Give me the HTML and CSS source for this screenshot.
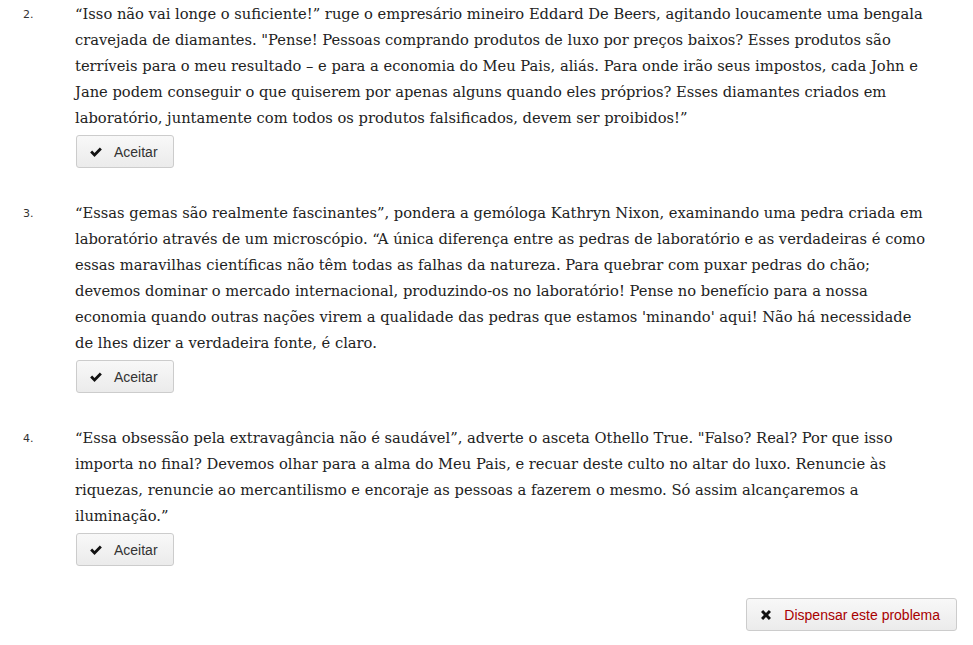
FILE: index.html
```html
<!DOCTYPE html>
<html lang="pt">
<head>
<meta charset="utf-8">
<link rel="stylesheet" href="styles.css">
</head>
<body>
<ol class="opts">
  <li class="opt">
    <span class="num">2.</span>
    <div class="body">
      <p class="quote">“Isso não vai longe o suficiente!” ruge o empresário mineiro Eddard De Beers, agitando loucamente uma bengala cravejada de diamantes. "Pense! Pessoas comprando produtos de luxo por preços baixos? Esses produtos são terríveis para o meu resultado – e para a economia do Meu Pais, aliás. Para onde irão seus impostos, cada John e Jane podem conseguir o que quiserem por apenas alguns quando eles próprios? Esses diamantes criados em laboratório, juntamente com todos os produtos falsificados, devem ser proibidos!”</p>
      <button class="btn"><svg class="ico" viewBox="0 0 16 16"><path d="M1.3 8.6 L3.6 6.3 L6.3 9 L12.4 2.9 L14.7 5.2 L6.3 13.6 Z"/></svg>Aceitar</button>
    </div>
  </li>
  <li class="opt">
    <span class="num">3.</span>
    <div class="body">
      <p class="quote">“Essas gemas são realmente fascinantes”, pondera a gemóloga Kathryn Nixon, examinando uma pedra criada em laboratório através de um microscópio. “A única diferença entre as pedras de laboratório e as verdadeiras é como essas maravilhas científicas não têm todas as falhas da natureza. Para quebrar com puxar pedras do chão; devemos dominar o mercado internacional, produzindo-os no laboratório! Pense no benefício para a nossa economia quando outras nações virem a qualidade das pedras que estamos 'minando' aqui! Não há necessidade de lhes dizer a verdadeira fonte, é claro.</p>
      <button class="btn"><svg class="ico" viewBox="0 0 16 16"><path d="M1.3 8.6 L3.6 6.3 L6.3 9 L12.4 2.9 L14.7 5.2 L6.3 13.6 Z"/></svg>Aceitar</button>
    </div>
  </li>
  <li class="opt">
    <span class="num">4.</span>
    <div class="body">
      <p class="quote">“Essa obsessão pela extravagância não é saudável”, adverte o asceta Othello True. "Falso? Real? Por que isso importa no final? Devemos olhar para a alma do Meu Pais, e recuar deste culto no altar do luxo. Renuncie às riquezas, renuncie ao mercantilismo e encoraje as pessoas a fazerem o mesmo. Só assim alcançaremos a iluminação.”</p>
      <button class="btn"><svg class="ico" viewBox="0 0 16 16"><path d="M1.3 8.6 L3.6 6.3 L6.3 9 L12.4 2.9 L14.7 5.2 L6.3 13.6 Z"/></svg>Aceitar</button>
    </div>
  </li>
</ol>
<div class="footer">
  <button class="btn dismiss"><svg class="ico" viewBox="0 0 16 16"><path d="M2.3 4.7 L4.7 2.3 L8 5.6 L11.3 2.3 L13.7 4.7 L10.4 8 L13.7 11.3 L11.3 13.7 L8 10.4 L4.7 13.7 L2.3 11.3 L5.6 8 Z"/></svg>Dispensar este problema</button>
</div>
</body>
</html>
```
FILE: styles.css
```css
html, body { margin: 0; padding: 0; background: #fff; }
body { width: 973px; padding-top: 1px; }
.opts {
  margin: 0;
  padding: 0;
  list-style: none;
}
.opt {
  display: flex;
  align-items: flex-start;
  margin-bottom: 32px;
}
.num {
  width: 52px;
  padding-left: 23px;
  flex: none;
  font-family: "DejaVu Sans", Verdana, sans-serif;
  font-size: 11px;
  line-height: 27px;
  color: #333;
}
.body { flex: 1; padding-right: 42px; }
.quote {
  margin: 0;
  font-family: "DejaVu Serif", serif;
  font-size: 14.7px;
  line-height: 26px;
  color: #222;
}
.btn {
  display: inline-flex;
  align-items: center;
  gap: 11px;
  margin-top: 4px;
  margin-left: 1px;
  height: 33px;
  padding: 0 15px 0 12px;
  border: 1px solid #ccc;
  border-radius: 3px;
  background: linear-gradient(#f8f8f8, #ebebeb);
  font-family: "Liberation Sans", Arial, sans-serif;
  font-size: 14px;
  color: #333;
}
.ico { width: 14px; height: 14px; fill: #111; }
.footer {
  display: flex;
  justify-content: flex-end;
  padding-right: 16px;
}
.dismiss { color: #a80000; margin: 0; padding: 0 16px 0 12px; }
```
